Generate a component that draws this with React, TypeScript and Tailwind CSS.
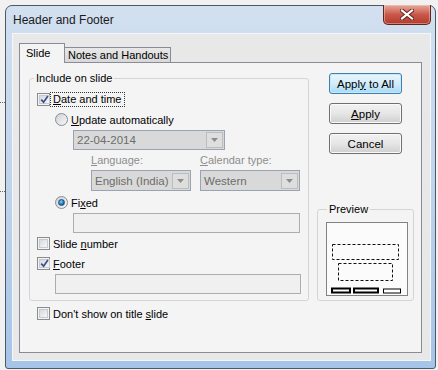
import React from "react";

function Check({ checked }: { checked?: boolean }) {
  return (
    <span className="w-[13px] h-[13px] shrink-0 border border-[#8a8c8f] bg-[#f4f4f4] p-[1px] flex">
      <span className="flex-1 border border-[#c6c9ce] bg-gradient-to-br from-[#d6d9de] to-[#f6f7f8] flex items-center justify-center">
        {checked && (
          <svg width="9" height="9" viewBox="0 0 9 9">
            <path d="M1.2 4.6 L3.6 7.2 L7.9 0.9" stroke="#3b4f8c" strokeWidth="1.7" fill="none" />
          </svg>
        )}
      </span>
    </span>
  );
}

function Radio({ checked }: { checked?: boolean }) {
  return (
    <span className="w-[13px] h-[13px] shrink-0 rounded-full border border-[#8a8c8f] bg-gradient-to-br from-[#cfd2d6] to-[#f7f7f7] flex items-center justify-center">
      {checked && (
        <span className="w-[7px] h-[7px] rounded-full bg-[radial-gradient(circle_at_40%_35%,#8fd3f7,#1b6fb0_60%,#0d4a7e)] border border-[#1d4f7a]" />
      )}
    </span>
  );
}

function Combo({ text, width }: { text: string; width: string }) {
  return (
    <div className={`${width} h-full border border-[#9aa3b1] bg-[#d9d9d9] flex items-center`}>
      <span className="flex-1 pl-[3px] text-[#6c6c6c] text-[11.5px] whitespace-nowrap overflow-hidden">{text}</span>
      <span className="w-[17px] h-[16px] mr-[1px] shrink-0 border border-[#bdbdbd] bg-[#dedede] flex items-center justify-center">
        <svg width="7" height="4" viewBox="0 0 7 4">
          <path d="M0 0 L7 0 L3.5 4 Z" fill="#8c8c8c" />
        </svg>
      </span>
    </div>
  );
}

function Button({ label, def }: { label: React.ReactNode; def?: boolean }) {
  return (
    <div
      className={
        def
          ? "w-[73px] h-[21px] rounded-[3px] border border-[#3c7fb1] bg-gradient-to-b from-[#eaf6fd] via-[#d3ecfa] to-[#a7d9f5] shadow-[inset_0_0_0_1px_#c9e9fb] flex items-center justify-center text-[11.5px]"
          : "w-[73px] h-[21px] rounded-[3px] border border-[#707070] bg-gradient-to-b from-[#f2f2f2] via-[#e6e6e6] to-[#cfcfcf] shadow-[inset_0_0_0_1px_#fafafa] flex items-center justify-center text-[11.5px]"
      }
    >
      {label}
    </div>
  );
}

export default function App() {
  return (
    <div className="w-[438px] h-[370px] bg-[#f1f1f1] flex font-['Liberation_Sans',Arial,sans-serif] text-[11px] leading-[14px] text-black overflow-hidden">
      <div className="w-[5px] shrink-0 flex flex-col">
        <div className="mt-[102px] h-0 border-t border-dotted border-[#666]" />
        <div className="mt-[88px] h-0 border-t border-dotted border-[#666]" />
      </div>
      <div className="mt-[5px] w-[431px] h-[364px] shrink-0 rounded-t-[7px] rounded-b-[3px] border border-[#4d5766] bg-gradient-to-b from-[#d2e0f0] via-[#bfd3eb] to-[#a6c4e8] flex flex-col pl-[6px] pr-[4px] pb-[7px]">
        <div className="h-[27px] flex items-start justify-between">
          <span className="mt-[7px] ml-[1px] text-[12px] leading-[14px] text-[#1a1a1a]">Header and Footer</span>
          <div className="-mt-[1px] w-[48px] h-[20px] rounded-b-[5px] border border-[#5e2520] border-t-0 bg-gradient-to-b from-[#e7a89c] via-[#c9584a] to-[#b33b2c] shadow-[inset_0_0_0_1px_rgba(255,210,200,0.45)] flex items-center justify-center">
            <svg width="14" height="11" viewBox="0 0 14 11">
              <path d="M2 1.5 L12 9.5 M12 1.5 L2 9.5" stroke="#5a1f18" strokeWidth="4" strokeLinecap="square" />
              <path d="M2 1.5 L12 9.5 M12 1.5 L2 9.5" stroke="#ffffff" strokeWidth="2.2" strokeLinecap="square" />
            </svg>
          </div>
        </div>
        <div className="flex-1 bg-[#e8e8e8] border border-[#f3f6fa] pl-[6px] pr-[8px] pt-[9px] pb-[7px] flex flex-col">
          <div className="h-[19px] flex items-end">
            <div className="relative z-10 w-[46px] h-[20px] -mb-[1px] border border-b-0 border-[#898c95] bg-[#f4f4f4] pl-[6px] pt-[2px]">
              Slide
            </div>
            <div className="-ml-[1px] w-[107px] h-[15px] border border-b-0 border-[#898c95] bg-gradient-to-b from-[#e8e8e8] to-[#d8d8d8] pl-[3px] flex items-center">
              Notes and Handouts
            </div>
          </div>
          <div className="flex-1 border border-[#898c95] bg-[#f4f4f4] flex flex-col pl-[9px] pr-[7px]">
            <div className="flex mt-[8px]">
              <fieldset className="w-[280px] border border-[#d3d5d8] rounded-[3px] pb-[6px]">
                <legend className="ml-[4px] px-[2px] leading-[14px]">Include on slide</legend>
                <div className="flex flex-col">
                  <div className="mt-[7px] h-[15px] pl-[7px] flex items-center">
                    <Check checked />
                    <span className="border border-dotted border-[#333] px-[2px] leading-[13px]">
                      <span className="underline">D</span>ate and time
                    </span>
                  </div>
                  <div className="mt-[5px] h-[15px] pl-[25px] flex items-center gap-[3px]">
                    <Radio />
                    <span>
                      <span className="underline">U</span>pdate automatically
                    </span>
                  </div>
                  <div className="mt-[3px] h-[20px] pl-[43px] flex">
                    <Combo text="22-04-2014" width="w-[152px]" />
                  </div>
                  <div className="mt-[3px] h-[14px] pl-[61px] flex items-center text-[#8d8d8d]">
                    <span className="w-[109px]">
                      <span className="underline">L</span>anguage:
                    </span>
                    <span>
                      <span className="underline">C</span>alendar type:
                    </span>
                  </div>
                  <div className="mt-[3px] h-[21px] pl-[61px] flex gap-[9px]">
                    <Combo text="English (India)" width="w-[100px]" />
                    <Combo text="Western" width="w-[100px]" />
                  </div>
                  <div className="mt-[4px] h-[15px] pl-[25px] flex items-center gap-[3px]">
                    <Radio checked />
                    <span>
                      Fi<span className="underline">x</span>ed
                    </span>
                  </div>
                  <div className="mt-[3px] h-[20px] pl-[43px] flex">
                    <div className="w-[227px] h-full border border-[#abadb3] bg-[#f0f0f0]" />
                  </div>
                  <div className="mt-[3px] h-[15px] pl-[7px] flex items-center gap-[3px]">
                    <Check />
                    <span>
                      Slide <span className="underline">n</span>umber
                    </span>
                  </div>
                  <div className="mt-[5px] h-[15px] pl-[7px] flex items-center gap-[3px]">
                    <Check checked />
                    <span>
                      <span className="underline">F</span>ooter
                    </span>
                  </div>
                  <div className="mt-[3px] h-[20px] pl-[25px] flex">
                    <div className="w-[246px] h-full border border-[#abadb3] bg-[#f0f0f0]" />
                  </div>
                </div>
              </fieldset>
              <div className="ml-[8px] w-[97px] flex flex-col items-center">
                <div className="mt-[2px] flex flex-col gap-[9px]">
                  <Button
                    def
                    label={
                      <span>
                        Appl<span className="underline">y</span> to All
                      </span>
                    }
                  />
                  <Button
                    label={
                      <span>
                        <span className="underline">A</span>pply
                      </span>
                    }
                  />
                  <Button label="Cancel" />
                </div>
                <fieldset className="mt-auto w-[97px] border border-[#d3d5d8] rounded-[3px] pb-[4px] pl-[8px]">
                  <legend className="ml-[1px] px-[2px] leading-[14px]">Preview</legend>
                  <div className="mt-[6px] w-[82px] h-[74px] border border-[#828282] bg-[#fbfbfb]">
                    <svg width="80" height="72" viewBox="0 0 80 72">
                      <rect x="5.5" y="21.5" width="66" height="15" fill="none" stroke="#111" strokeDasharray="3 2" />
                      <rect x="11.5" y="40.5" width="54" height="17" fill="none" stroke="#111" strokeDasharray="3 2" />
                      <rect x="5" y="65.5" width="18" height="4" fill="none" stroke="#000" strokeWidth="2" />
                      <rect x="27" y="65.5" width="24" height="4" fill="none" stroke="#000" strokeWidth="2" />
                      <rect x="56.5" y="66" width="17" height="4" fill="#fff" stroke="#000" strokeWidth="1" />
                    </svg>
                  </div>
                </fieldset>
              </div>
            </div>
            <div className="mt-[5px] h-[15px] pl-[8px] flex items-center gap-[3px]">
              <Check />
              <span>
                Don't show on title <span className="underline">s</span>lide
              </span>
            </div>
          </div>
        </div>
      </div>
    </div>
  );
}
